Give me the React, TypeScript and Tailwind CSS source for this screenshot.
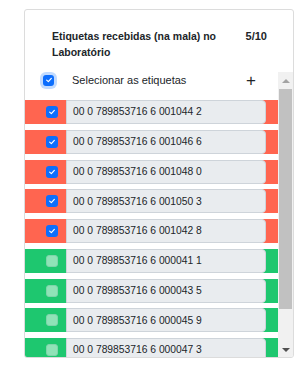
import React from "react";

interface Etiqueta {
    codigo: string;
    recebida: boolean;
}

const etiquetas: Etiqueta[] = [
    { codigo: "00 0 789853716 6 001044 2", recebida: true },
    { codigo: "00 0 789853716 6 001046 6", recebida: true },
    { codigo: "00 0 789853716 6 001048 0", recebida: true },
    { codigo: "00 0 789853716 6 001050 3", recebida: true },
    { codigo: "00 0 789853716 6 001042 8", recebida: true },
    { codigo: "00 0 789853716 6 000041 1", recebida: false },
    { codigo: "00 0 789853716 6 000043 5", recebida: false },
    { codigo: "00 0 789853716 6 000045 9", recebida: false },
    { codigo: "00 0 789853716 6 000047 3", recebida: false },
];

const total = 10;

const Check = () => (
    <svg viewBox="0 0 12 12" className="w-[8px] h-[8px]">
        <path
            d="M2.5 6.2 L5 8.5 L9.5 3.5"
            fill="none"
            stroke="white"
            strokeWidth="1.8"
            strokeLinecap="round"
            strokeLinejoin="round"
        />
    </svg>
);

const Checkbox: React.FC<{ checked: boolean }> = ({ checked }) =>
    checked ? (
        <div className="w-[12px] h-[12px] rounded-[3px] bg-[#0d6efd] flex items-center justify-center">
            <Check />
        </div>
    ) : (
        <div className="w-[12px] h-[12px] rounded-[3px] bg-white border border-[#dee2e6] opacity-50" />
    );

const App: React.FC = () => {
    const recebidas = etiquetas.filter((e) => e.recebida).length;

    return (
        <div
            className="w-[308px] h-[373px] bg-white pt-[9px] pl-[24px] text-[#212529]"
            style={{ fontFamily: '"Liberation Sans", Arial, sans-serif' }}
        >
            <div className="w-[270px] h-[349px] border border-[#dcdcdc] rounded-[3px] flex flex-col overflow-hidden">
                <div className="flex justify-between pt-[18px] pl-[27px] pr-[26px] pb-[12px] text-[10.5px] leading-[16px] font-bold">
                    <p className="w-[172px]">Etiquetas recebidas (na mala) no Laboratório</p>
                    <p className="text-[11px]">
                        {recebidas}/{total}
                    </p>
                </div>
                <div className="flex flex-1 min-h-0">
                    <div className="flex-1 overflow-hidden">
                        <div className="flex items-center h-[16px] mb-[12px] pl-[18px] pr-[22px] text-[11px]">
                            <div className="w-[11px] h-[11px] rounded-[3px] bg-[#0d6efd] flex items-center justify-center ring-[3px] ring-[#c2dbfe]">
                                <Check />
                            </div>
                            <span className="ml-[18px] flex-1">Selecionar as etiquetas</span>
                            <span className="text-[17px] leading-none font-light">+</span>
                        </div>
                        <div className="flex flex-col gap-[5.75px]">
                            {etiquetas.map((e) => (
                                <div
                                    key={e.codigo}
                                    className={`flex h-[24px] shrink-0 pr-[12px] ${
                                        e.recebida ? "bg-[#ff6550]" : "bg-[#1ec76f]"
                                    }`}
                                >
                                    <div className="w-[41px] flex items-center pl-[21px]">
                                        <Checkbox checked={e.recebida} />
                                    </div>
                                    <div className="flex-1 flex items-center bg-[#e9ecef] border border-[#ced4da] rounded-r-[4px] pl-[6px] text-[10.3px]">
                                        {e.codigo}
                                    </div>
                                </div>
                            ))}
                        </div>
                    </div>
                    <div className="w-[15px] bg-[#f1f1f1] flex flex-col">
                        <div className="h-[17px] flex items-center justify-center">
                            <div className="w-0 h-0 border-l-[4px] border-r-[4px] border-b-[4px] border-l-transparent border-r-transparent border-b-[#a3a3a3]" />
                        </div>
                        <div className="h-[220px] mx-[1px] bg-[#c1c1c1]" />
                        <div className="flex-1" />
                        <div className="h-[15px] flex items-center justify-center">
                            <div className="w-0 h-0 border-l-[4px] border-r-[4px] border-t-[4px] border-l-transparent border-r-transparent border-t-[#505050]" />
                        </div>
                    </div>
                </div>
            </div>
        </div>
    );
};

export default App;
